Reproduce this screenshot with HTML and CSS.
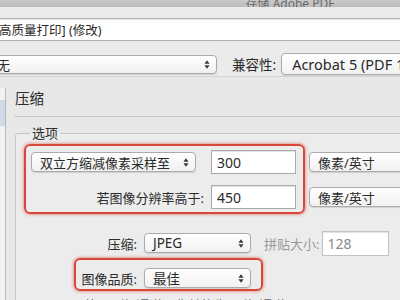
FILE: index.html
```html
<!DOCTYPE html>
<html lang="zh-CN">
<head>
    <meta charset="UTF-8">
    <title>存储 Adobe PDF</title>
    <link rel="stylesheet" href="styles.css">
</head>
<body>
    <div class="window">
        <div class="titlebar"><span class="title">存储 Adobe PDF</span></div>

        <div class="top">
            <div class="field preset">[高质量打印] (修改)</div>
            <div class="std-row">
                <div class="select std"><span>无</span><svg class="arrows" viewBox="0 0 7 12"><path d="M3.5 1L6.5 5H0.5Z M3.5 11L0.5 7H6.5Z"/></svg></div>
                <span class="label">兼容性:</span>
                <div class="select compat"><span>Acrobat 5 (PDF 1.4)</span></div>
            </div>
        </div>

        <div class="body">
            <div class="sidebar"><div class="sidebar-item"></div></div>
            <div class="main">
                <h2 class="heading">压缩</h2>
                <hr class="sep">
                <fieldset class="group">
                    <legend>选项</legend>
                    <div class="opts">
                        <div class="row">
                            <div class="select method"><span>双立方缩减像素采样至</span><svg class="arrows" viewBox="0 0 7 12"><path d="M3.5 1L6.5 5H0.5Z M3.5 11L0.5 7H6.5Z"/></svg></div>
                            <div class="field num first">300</div>
                            <div class="select unit"><span>像素/英寸</span></div>
                        </div>
                        <div class="row gap-s">
                            <span class="label wide">若图像分辨率高于:</span>
                            <div class="field num">450</div>
                            <div class="select unit"><span>像素/英寸</span></div>
                        </div>
                        <div class="row gap-l">
                            <span class="label narrow">压缩:</span>
                            <div class="select short"><span>JPEG</span><svg class="arrows" viewBox="0 0 7 12"><path d="M3.5 1L6.5 5H0.5Z M3.5 11L0.5 7H6.5Z"/></svg></div>
                            <span class="label dim">拼贴大小:</span>
                            <div class="field tile">128</div>
                        </div>
                        <div class="row gap-s">
                            <span class="label narrow">图像品质:</span>
                            <div class="select short"><span>最佳</span><svg class="arrows" viewBox="0 0 7 12"><path d="M3.5 1L6.5 5H0.5Z M3.5 11L0.5 7H6.5Z"/></svg></div>
                        </div>
                        <div class="row check-row">
                            <span class="check">✓</span>
                            <span class="label">将 16 位/通道图像转换为 8 位/通道</span>
                        </div>

                        <!-- red highlight marks drawn over the dialog -->
                        <div class="mark mark-res"></div>
                        <div class="mark mark-quality"></div>
                    </div>
                </fieldset>
            </div>
        </div>
    </div>
</body>
</html>
```

FILE: styles.css
```css
html, body {
    margin: 0;
    padding: 0;
}

body {
    width: 400px;
    height: 300px;
    overflow: hidden;
    background-color: #e8e8e8;
    color: #2a2a2a;
    font-family: "Noto Sans", "Noto Sans CJK SC", sans-serif;
    font-size: 13px;
}

.window {
    width: 400px;
}

.titlebar {
    height: 7px;
    overflow: hidden;
    display: flex;
    justify-content: center;
    align-items: flex-end;
    background: linear-gradient(#c9c9c9, #bcbcbc);
    padding-left: 180px;
}

.title {
    flex-shrink: 0;
    font-size: 12px;
    line-height: 12px;
    color: #6a6a6a;
    margin-bottom: -3px;
}

.top {
    padding: 11px 0 0;
    height: 58px;
    background-color: #ebebeb;
    border-bottom: 1px solid #d4d4d4;
}

/* controls */
.field {
    box-sizing: border-box;
    background-color: #fff;
    border: 1px solid #a9a9a9;
    box-shadow: inset 0 1px 1px rgba(0,0,0,0.12);
    display: flex;
    align-items: center;
    flex-shrink: 0;
}

.select {
    box-sizing: border-box;
    height: 20px;
    background: linear-gradient(#ffffff, #f1f1f1);
    border: 1px solid #ababab;
    border-radius: 4px;
    box-shadow: 0 1px 1px rgba(0,0,0,0.12);
    display: flex;
    align-items: center;
    justify-content: space-between;
    padding: 0 6px 0 8px;
    flex-shrink: 0;
    white-space: nowrap;
}

.arrows {
    width: 6px;
    height: 11px;
    fill: #3a3a3a;
}

.label {
    flex-shrink: 0;
    white-space: nowrap;
}

.preset {
    height: 23px;
    margin-left: -7px;
    width: 430px;
    padding-left: 1px;
    font-size: 12.5px;
    border-color: #b2b2b2;
}

.std-row {
    display: flex;
    align-items: center;
    margin-top: 12px;
}

.std {
    height: 19px;
    width: 237px;
    margin-left: -20px;
    padding-left: 16px;
    padding-right: 6px;
}

.std-row .label {
    margin-left: 15px;
    font-size: 13.5px;
}

.compat {
    height: 22px;
    width: 150px;
    margin-left: 5px;
    padding-left: 10px;
    font-size: 14.5px;
}

.body {
    display: flex;
}

.sidebar {
    width: 6px;
    margin-top: 11px;
    height: 220px;
    background-color: #f2f2f2;
    border-right: 1px solid #b9b9b9;
}

.sidebar-item {
    margin-top: 12px;
    height: 26px;
    background-color: #cfdbe9;
}

.main {
    flex: 1;
    padding: 11px 0 0 8px;
}

.heading {
    margin: 0 0 8px 1px;
    font-size: 14.5px;
    font-weight: normal;
    line-height: 20px;
}

.sep {
    margin: 0 -10px 0 0;
    border: 0;
    border-top: 1px solid #c9c9c9;
}

.group {
    margin: 9px -20px 0 1px;
    padding: 9px 0 0;
    border: 1px solid #c6c6c6;
    border-radius: 3px;
    background-color: #ececec;
}

.group legend {
    margin-left: 14px;
    padding: 0 2px;
    line-height: 15px;
}

.opts {
    position: relative;
}

.row {
    display: flex;
    align-items: center;
    height: 24px;
}

.gap-s {
    margin-top: 11px;
}

.gap-l {
    margin-top: 22px;
}

.method {
    width: 165px;
    margin-left: 15px;
}

.num {
    width: 85px;
    height: 24px;
    padding-left: 5px;
    font-size: 14px;
}

.num.first {
    margin-left: 15px;
}

.unit {
    width: 110px;
    margin-left: 13px;
}

.wide {
    width: 188px;
    text-align: right;
    margin-right: 7px;
}

.narrow {
    width: 121px;
    text-align: right;
    margin-right: 7px;
}

.short {
    width: 107px;
    font-size: 13.5px;
}

.dim {
    color: #9a9a9a;
    margin-left: 13px;
    margin-right: 3px;
}

.tile {
    width: 67px;
    height: 25px;
    padding-left: 4px;
    color: #8a8a8a;
    font-size: 14px;
    border-color: #c2c2c2;
}

.check-row {
    margin-top: 2px;
    color: #666;
}

.check {
    width: 14px;
    margin-left: 12px;
    margin-right: 42px;
    color: #555;
}

.mark {
    position: absolute;
    box-sizing: border-box;
    border: 2px solid #d8483a;
    border-radius: 6px;
    box-shadow: 0 0 3px 1px rgba(216,72,58,0.45);
    pointer-events: none;
}

.mark-res {
    left: 8px;
    top: -6px;
    width: 281px;
    height: 70px;
}

.mark-quality {
    left: 58px;
    top: 108px;
    width: 189px;
    height: 33px;
}
```
